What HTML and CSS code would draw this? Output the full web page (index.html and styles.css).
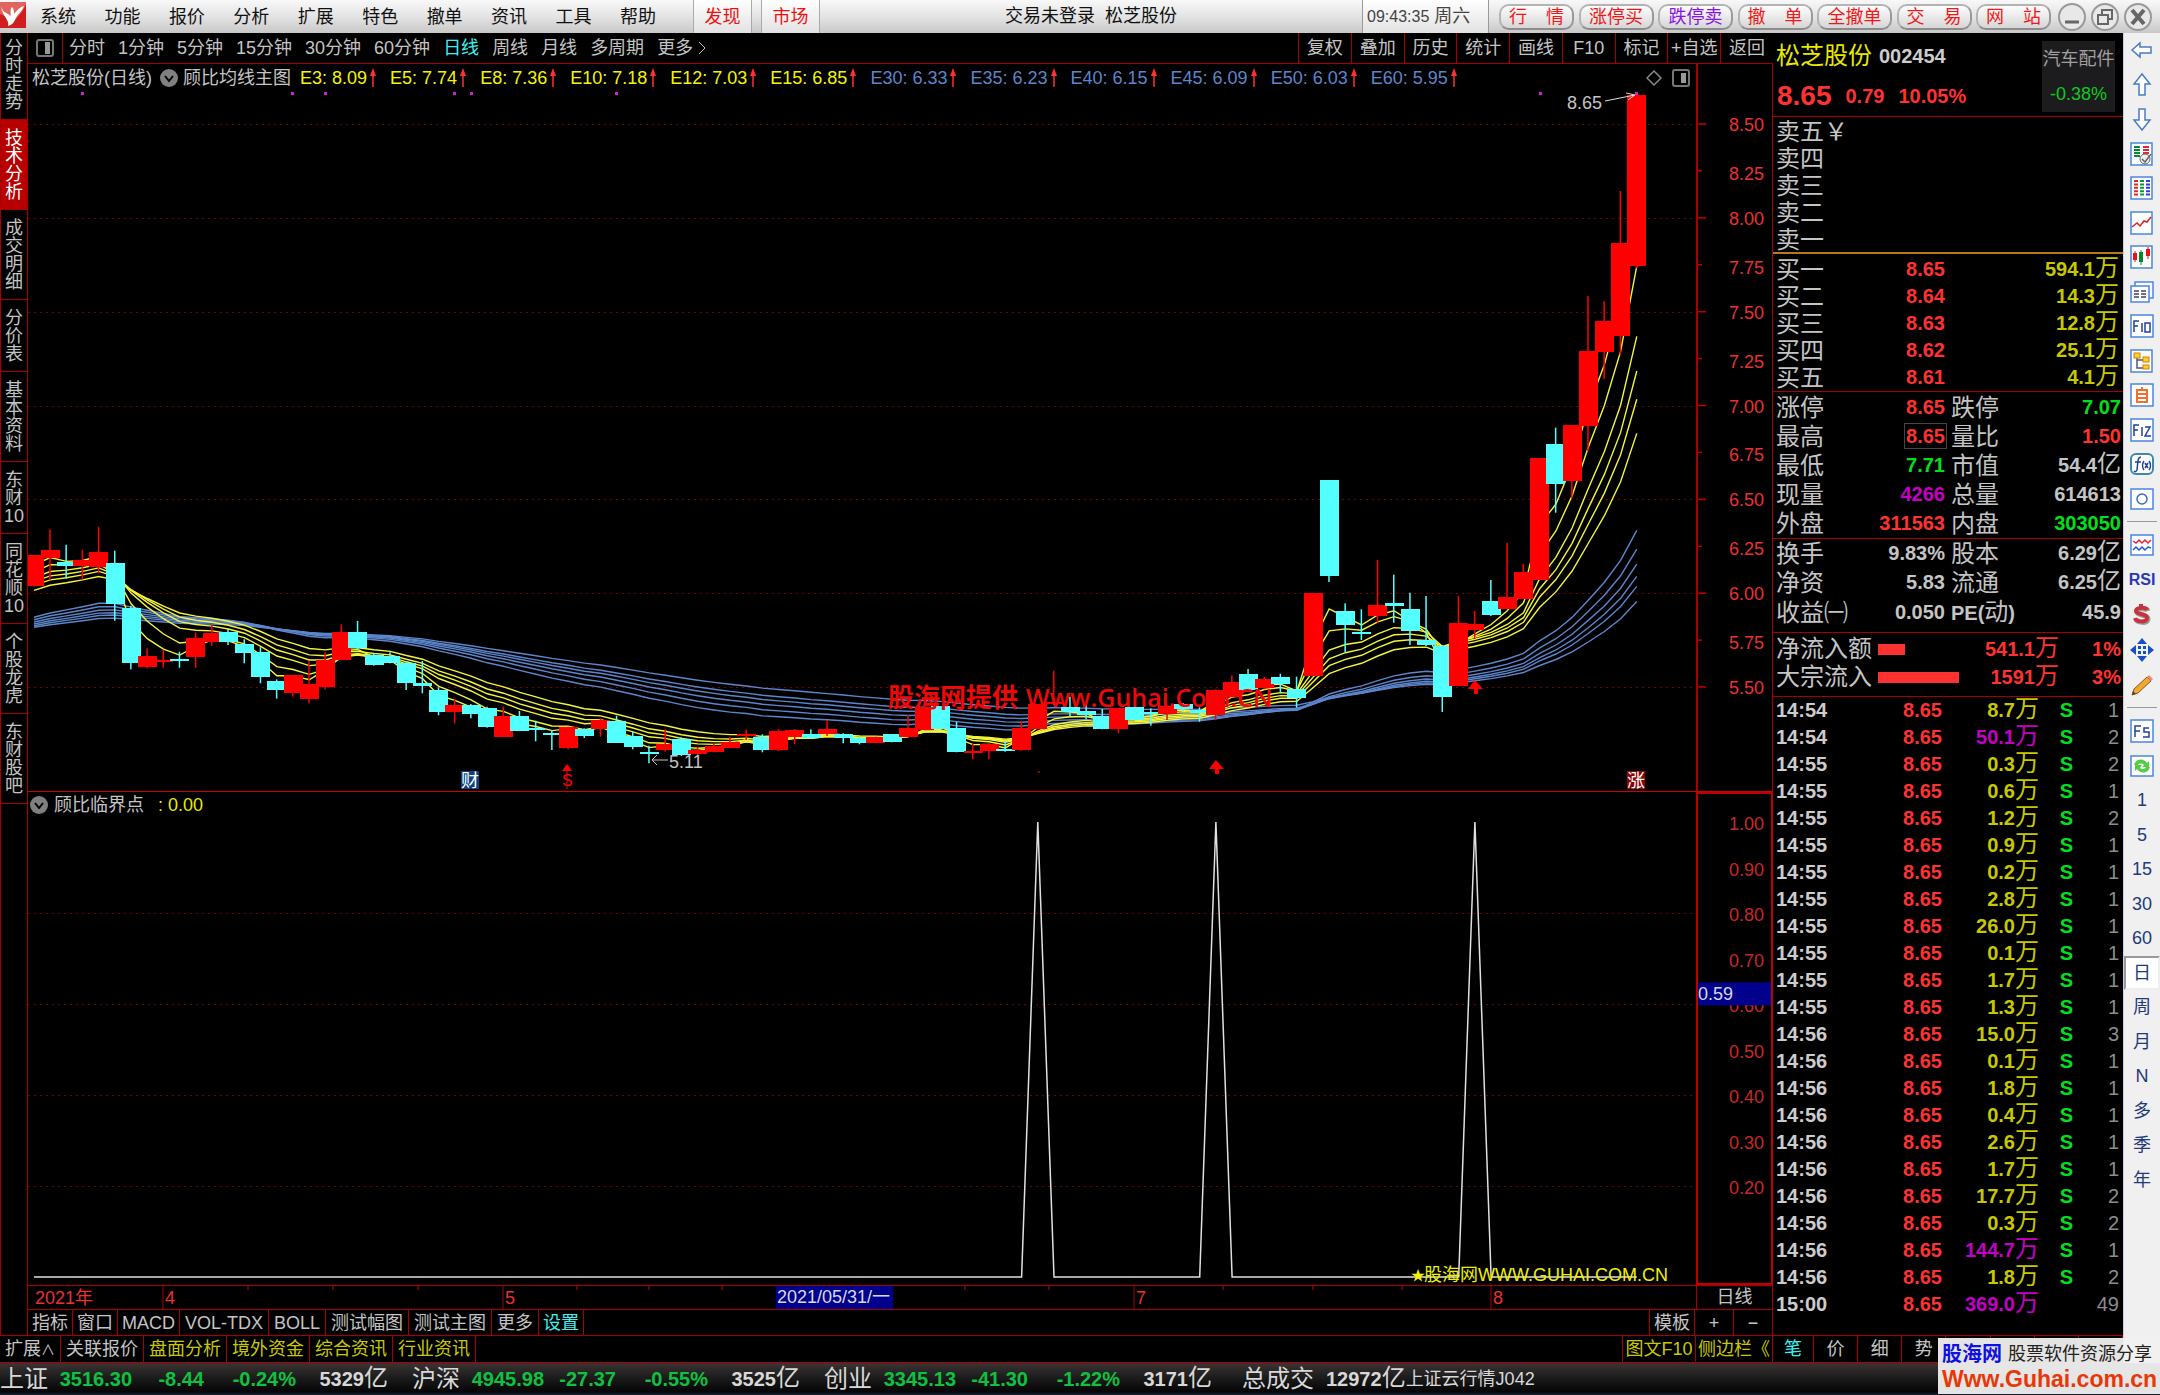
FILE: index.html
```html
<!DOCTYPE html>
<html lang="zh-CN">
<head>
<meta charset="utf-8">
<title>松芝股份 日线</title>
<link rel="stylesheet" href="styles.css">
</head>
<body>
<header class="titlebar">
  <svg class="logo" viewBox="0 0 26 26"><rect width="26" height="26" fill="#e2645e"/><path d="M0 12 0 26 26 26 26 2C22 12 16 16 12 22 10 18 6 14 0 12Z" fill="#cf1f1c"/><path d="M1 4C3 12 8 10 10 14 12 12 9 8 12 5 14 7 14 9 14 12 17 8 20 5 24 4 22 10 17 12 15 18 13 22 11 23 8 24 10 18 2 14 1 4Z" fill="#fff"/></svg>
  <nav class="menu">
    <button>系统</button><button>功能</button><button>报价</button><button>分析</button><button>扩展</button><button>特色</button><button>撤单</button><button>资讯</button><button>工具</button><button>帮助</button>
  </nav>
  <div class="hot"><button>发现</button><button>市场</button></div>
  <h1 class="caption">交易未登录&nbsp; 松芝股份</h1>
  <div class="clock"><span class="digits">09:43:35</span> 周六</div>
  <div class="trade">
    <button class="spread"><span>行</span><span>情</span></button><button>涨停买</button><button class="violet">跌停卖</button><button class="spread"><span>撤</span><span>单</span></button><button>全撤单</button><button class="spread"><span>交</span><span>易</span></button><button class="spread"><span>网</span><span>站</span></button>
  </div>
  <div class="winctl">
    <button aria-label="最小化"><svg viewBox="0 0 30 30"><circle cx="15" cy="15" r="13"/><path d="M8 20H22" stroke-width="3"/></svg></button>
    <button aria-label="还原"><svg viewBox="0 0 30 30"><circle cx="15" cy="15" r="13"/><path d="M12 12V8H22V17H19M8 13H18V22H8Z"/></svg></button>
    <button aria-label="关闭"><svg viewBox="0 0 30 30"><circle cx="15" cy="15" r="13"/><path d="M9 8 21 22M21 8 9 22" stroke-width="4"/></svg></button>
  </div>
</header>

<div class="body">
  <div class="work">
    <div class="upper">
      <nav class="rail">
        <button>分时走势</button><button class="on">技术分析</button><button>成交明细</button><button>分价表</button><button>基本资料</button><button>东财<span>10</span></button><button>同花顺<span>10</span></button><button>个股龙虎</button><button>东财股吧</button>
      </nav>
      <main class="center">
        <div class="periods">
          <button class="fold" aria-label="面板"><svg viewBox="0 0 18 18"><rect x="1" y="1" width="16" height="16" rx="2" fill="none" stroke="#777" stroke-width="2"/><rect x="9" y="3" width="5" height="12" fill="#999"/></svg></button>
          <div class="plist"><button>分时</button><button>1分钟</button><button>5分钟</button><button>15分钟</button><button>30分钟</button><button>60分钟</button><button class="on">日线</button><button>周线</button><button>月线</button><button>多周期</button><button>更多<svg class="chev" viewBox="0 0 10 18"><path d="M2 3 8 9 2 15" fill="none" stroke="#c0c0c0"/></svg></button></div>
          <div class="acts"><button>复权</button><button>叠加</button><button>历史</button><button>统计</button><button>画线</button><button>F10</button><button>标记</button><button>+自选</button><button>返回</button></div>
        </div>
        <section class="pane price">
          <div class="plotcol">
            <div class="legend">
              <span>松芝股份(日线)</span>
              <svg class="drop" viewBox="0 0 18 18"><circle cx="9" cy="9" r="9" fill="#808080"/><path d="M5 7 9 12 13 7" fill="none" stroke="#000" stroke-width="2"/></svg>
              <span class="iname">顾比均线主图</span>
              <div class="emas" id="emas"></div>
              <svg class="corner" viewBox="0 0 50 20"><path d="M8 3 15 10 8 17 1 10Z" fill="none" stroke="#888" stroke-width="1.5"/><rect x="27" y="2" width="16" height="16" rx="2" fill="none" stroke="#777" stroke-width="2"/><rect x="35" y="5" width="5" height="10" fill="#999"/></svg>
            </div>
            <div class="plot"><svg id="pricePlot"></svg></div>
          </div>
          <div class="axis"><svg id="priceAxis"></svg></div>
        </section>
        <section class="pane sub">
          <div class="plotcol">
            <div class="legend">
              <svg class="drop" viewBox="0 0 18 18"><circle cx="9" cy="9" r="9" fill="#808080"/><path d="M5 7 9 12 13 7" fill="none" stroke="#000" stroke-width="2"/></svg>
              <span class="iname">顾比临界点</span><span class="val">: 0.00</span>
            </div>
            <div class="plot"><svg id="subPlot"></svg></div>
          </div>
          <div class="axis boxed"><svg id="subAxis"></svg></div>
        </section>
        <div class="timeline"><div class="plot"><svg id="timeAxis"></svg></div><div class="tcell">日线</div></div>
        <div class="tabs itabs">
          <button>指标</button><button>窗口</button><button>MACD</button><button>VOL-TDX</button><button>BOLL</button><button>测试幅图</button><button>测试主图</button><button>更多</button><button class="cyan">设置</button>
          <span class="fill"></span>
          <button class="lead">模板</button><button class="sq">+</button><button class="sq">−</button>
        </div>
      </main>
    </div>
    <div class="tabs etabs">
      <button>扩展<span class="caret">∧</span></button><button>关联报价</button><button class="gold">盘面分析</button><button class="gold">境外资金</button><button class="gold">综合资讯</button><button class="gold">行业资讯</button>
      <span class="fill"></span>
      <button class="gold lead f10">图文F10</button><button class="gold side">侧边栏<span>《</span></button>
    </div>
  </div>

  <aside class="quote">
    <div class="qhead">
      <div class="qname"><span class="nm">松芝股份</span><b>002454</b></div>
      <div class="qprice"><b class="big">8.65</b><b>0.79</b><b>10.05%</b></div>
      <a class="sector" href="#"><span>汽车配件</span><span class="chg">-0.38%</span></a>
    </div>
    <div class="asks"><div>卖五￥</div><div>卖四</div><div>卖三</div><div>卖二</div><div>卖一</div></div>
    <table class="bids">
      <tr><th>买一</th><td class="up">8.65</td><td class="vol">594.1<i>万</i></td></tr>
      <tr><th>买二</th><td class="up">8.64</td><td class="vol">14.3<i>万</i></td></tr>
      <tr><th>买三</th><td class="up">8.63</td><td class="vol">12.8<i>万</i></td></tr>
      <tr><th>买四</th><td class="up">8.62</td><td class="vol">25.1<i>万</i></td></tr>
      <tr><th>买五</th><td class="up">8.61</td><td class="vol">4.1<i>万</i></td></tr>
    </table>
    <table class="facts">
      <tr><th>涨停</th><td class="up">8.65</td><th>跌停</th><td class="down">7.07</td></tr>
      <tr><th>最高</th><td class="up"><span class="hi">8.65</span></td><th>量比</th><td class="up">1.50</td></tr>
      <tr><th>最低</th><td class="down">7.71</td><th>市值</th><td>54.4<i>亿</i></td></tr>
      <tr><th>现量</th><td class="mag">4266</td><th>总量</th><td>614613</td></tr>
      <tr><th>外盘</th><td class="up">311563</td><th>内盘</th><td class="down">303050</td></tr>
    </table>
    <table class="facts more">
      <tr><th>换手</th><td>9.83%</td><th>股本</th><td>6.29<i>亿</i></td></tr>
      <tr><th>净资</th><td>5.83</td><th>流通</th><td>6.25<i>亿</i></td></tr>
      <tr><th>收益㈠</th><td>0.050</td><th><span class="pe">PE(</span>动<span class="pe">)</span></th><td>45.9</td></tr>
    </table>
    <div class="flows">
      <div class="flow"><span>净流入额</span><span class="track"><span class="bar" style="width:27px"></span></span><b>541.1<i>万</i></b><b>1%</b></div>
      <div class="flow"><span>大宗流入</span><span class="track"><span class="bar" style="width:81px"></span></span><b>1591<i>万</i></b><b>3%</b></div>
    </div>
    <table class="deals"><tbody id="deals"></tbody></table>
    <nav class="qtabs"><button class="on">笔</button><button>价</button><button>细</button><button>势</button><button aria-label="联动"></button><button aria-label="分值"></button><button aria-label="主力"></button><button aria-label="筹码"></button></nav>
  </aside>

  <nav class="tools">
    <div class="tgroup g14">
      <button aria-label="后退"><svg viewBox="0 0 24 24"><path class="ar" d="M2 12 10 5V9H21V15H10V19Z"/></svg></button>
      <button aria-label="上"><svg viewBox="0 0 24 24"><path class="ar" d="M12 1 20 11H15V22H9V11H4Z"/></svg></button>
      <button aria-label="下"><svg viewBox="0 0 24 24"><path class="ar" d="M12 23 20 13H15V2H9V13H4Z"/></svg></button>
      <button aria-label="报价"><svg viewBox="0 0 24 24"><rect class="fr" x="1" y="1" width="21" height="22"/><path d="M4 5H10M4 8H10M4 11H10M4 14H10" stroke="#0a8a2a" stroke-width="2"/><path d="M13 5H19M13 8H19M13 11H19" stroke="#e02a3a" stroke-width="2"/><circle cx="15" cy="17" r="5" fill="#eee" stroke="#666"/><path d="M12 17 15 20 21 12" fill="none" stroke="#666" stroke-width="1.5"/></svg></button>
      <button aria-label="列表"><svg viewBox="0 0 24 24"><rect class="fr" x="1" y="1" width="21" height="22"/><g stroke-width="4" stroke-dasharray="2 1.4"><path d="M6 4V21" stroke="#e02a2a"/><path d="M12 4V21" stroke="#0a9a2a"/><path d="M18 4V21" stroke="#2a3ae0"/></g></svg></button>
      <button aria-label="走势"><svg viewBox="0 0 24 24"><rect class="fr" x="1" y="1" width="21" height="22"/><path d="M2 16 7 12 10 15 14 10 17 11 21 6" fill="none" stroke="#d22" stroke-width="1.5"/></svg></button>
      <button aria-label="K线"><svg viewBox="0 0 24 24"><rect class="fr" x="1" y="1" width="21" height="22"/><path d="M5 6V17M18 2V14" stroke="#d11"/><path d="M11 5V20" stroke="#082"/><rect x="3" y="8" width="4" height="7" fill="#e11"/><rect x="9" y="7" width="4" height="10" fill="#083"/><rect x="16" y="4" width="4" height="7" fill="#e11"/></svg></button>
      <button aria-label="窗口"><svg viewBox="0 0 24 24"><rect class="fr" x="5" y="2" width="18" height="16"/><rect class="fr" x="1" y="6" width="18" height="16"/><path d="M4 11H9M11 11H16M4 14H9M11 14H16M4 17H9M11 17H16" stroke="#445" stroke-width="1.5"/></svg></button>
      <button aria-label="F10"><svg viewBox="0 0 24 24"><rect class="fr" x="1" y="1" width="22" height="22"/><path class="gl" d="M4 18V7H9M4 12H8M12 9V18M15 9H20V18H15Z"/></svg></button>
      <button aria-label="板块树"><svg viewBox="0 0 24 24"><rect class="fr" x="1" y="1" width="21" height="22"/><path d="M7 7V19H14M7 11H14" fill="none" stroke="#557" stroke-width="1.5"/><g fill="#fc3" stroke="#c80"><rect x="4" y="4" width="6" height="5"/><rect x="13" y="8" width="6" height="5"/><rect x="13" y="16" width="6" height="4"/></g></svg></button>
      <button aria-label="自选"><svg viewBox="0 0 24 24"><rect class="fr" x="1" y="1" width="22" height="22"/><path d="M12 4V7M7 7H17V19H7ZM7 11H17M7 15H17" fill="none" stroke="#f07030" stroke-width="2"/></svg></button>
      <button aria-label="F12"><svg viewBox="0 0 24 24"><rect class="fr" x="1" y="1" width="22" height="22"/><path class="gl" d="M4 18V7H9M4 12H8M12 9V18M15 9H20L15 18H21"/></svg></button>
      <button aria-label="公式"><svg viewBox="0 0 24 24"><rect x="1" y="2" width="22" height="20" rx="5" fill="#fff" stroke="#3a8ab0" stroke-width="2"/><path class="gl" d="M11 5C8 5 8 8 7 18 6 20 5 20 4 19M5 10H11M14 9C12 12 12 15 14 18M15 11 18 16M18 11 15 16M19 9C21 12 21 15 19 18"/></svg></button>
      <button aria-label="圆"><svg viewBox="0 0 24 24"><rect class="fr" x="1" y="2" width="22" height="20"/><circle cx="12" cy="12" r="5" fill="none" stroke="#3a6ac0" stroke-width="1.5"/></svg></button>
    </div>
    <hr>
    <div class="tgroup g5">
      <button aria-label="波浪"><svg viewBox="0 0 24 24"><rect class="fr" x="1" y="2" width="22" height="20"/><path d="M3 8 6 10 9 7 12 10 15 7 18 10 21 7" fill="none" stroke="#e23" stroke-width="1.5"/><path d="M3 17 6 14 9 17 12 14 15 17 18 14 21 15" fill="none" stroke="#25d" stroke-width="1.5"/></svg></button>
      <button class="rsi">RSI</button>
      <button aria-label="资金"><svg viewBox="0 0 24 24"><path d="M18 8C17 5 7 5 7 9 7 13 18 11 18 16 18 21 7 20 6 16" fill="none" stroke="#999" stroke-width="5"/><path d="M17 7C16 4 6 4 6 8 6 12 17 10 17 15 17 20 6 19 5 15M11 1V4" fill="none" stroke="#c8323c" stroke-width="4"/></svg></button>
      <button aria-label="移动"><svg viewBox="0 0 24 24"><path d="M12 0 17 6H7ZM12 24 17 18H7ZM0 12 6 7V17ZM24 12 18 7V17ZM8 8H11V11H8ZM13 8H16V11H13ZM8 13H11V16H8ZM13 13H16V16H13Z" fill="#1450c8"/></svg></button>
      <button aria-label="画笔"><svg viewBox="0 0 24 24"><path d="M2 22 4 16 17 4 21 8 8 20Z" fill="#f0a830" stroke="#8a5a20"/><path d="M17 4 19 2 23 6 21 8Z" fill="#e88"/><path d="M2 22 3 18 6 21Z" fill="#543"/></svg></button>
    </div>
    <hr>
    <div class="tgroup g14">
      <button aria-label="F5"><svg viewBox="0 0 24 24"><rect class="fr" x="1" y="1" width="22" height="22"/><path class="gl" d="M5 18V7H11M5 12H10M19 9H14V13H19V18H13"/></svg></button>
      <button aria-label="刷新"><svg viewBox="0 0 24 24"><rect class="fr" x="1" y="2" width="22" height="20"/><path d="M4 11C6 4 14 4 17 9L19 7V13H12L14 11C12 9 9 9 8 11ZM20 13C18 20 10 20 7 15L5 17V11H12L10 14C12 16 15 15 16 13Z" fill="#5c4"/></svg></button>
      <button>1</button><button>5</button><button>15</button><button>30</button><button>60</button><button class="on">日</button><button>周</button><button>月</button><button>N</button><button>多</button><button>季</button><button>年</button>
    </div>
  </nav>
</div>

<footer class="status">
  <div class="idx"><span class="k">上证</span><b class="g">3516.30</b><b class="g">-8.44</b><b class="g">-0.24%</b><b>5329<i>亿</i></b></div>
  <div class="idx"><span class="k">沪深</span><b class="g">4945.98</b><b class="g">-27.37</b><b class="g">-0.55%</b><b>3525<i>亿</i></b></div>
  <div class="idx"><span class="k">创业</span><b class="g">3345.13</b><b class="g">-41.30</b><b class="g">-1.22%</b><b>3171<i>亿</i></b></div>
  <div class="total"><span class="k">总成交</span><b>12972<i>亿</i></b><span class="src">上证云行情J042</span></div>
</footer>
<div class="badge"><div class="bline"><b>股海网</b><span>股票软件资源分享</span></div><a href="#">Www.Guhai.com.cn</a></div>
<script src="chart.js"></script>
</body>
</html>
```
FILE: styles.css
```css
*{box-sizing:border-box}
html,body{height:100%;margin:0}
body{
  --line:#a80000;
  --txt:#c4c4c4;
  display:flex;flex-direction:column;
  min-height:900px;background:#000;color:var(--txt);
  font:18px/24px "Liberation Sans","Noto Sans CJK SC",sans-serif;
  overflow:hidden;
}
button{margin:0;padding:0;border:0;background:none;color:inherit;font:inherit;white-space:nowrap}
a{text-decoration:none;color:inherit}
i{font-style:normal;font-weight:400;font-size:24px}
svg{display:block}

/* title bar */
.titlebar{flex:none;height:33px;display:flex;align-items:stretch;color:#111;background:linear-gradient(#f8f8f8,#e4e4e4 50%,#c8c8c8)}
.logo{width:26px;height:26px;margin-top:2px}
.menu{width:616px;margin-left:14px;display:flex;justify-content:space-between}
.hot{display:flex;gap:9px;margin-left:37px}
.hot button{width:59px;color:#f01010;background:linear-gradient(#fff,#e2e2e2);border-left:1px solid #aaa;border-right:1px solid #aaa}
.caption{flex:1;margin:0;font-size:18px;font-weight:400;line-height:33px;text-align:center}
.clock{width:127px;padding-left:4px;line-height:33px;color:#444;background:linear-gradient(#fff,#e2e2e2);border-left:1px solid #999;border-right:1px solid #999}
.digits{font-size:16px}
.trade{width:552px;margin-left:10px;display:flex;justify-content:space-between;align-items:center}
.trade button{width:75px;height:26px;line-height:22px;color:#f01818;border:2px solid #b4b4b4;border-bottom-color:#8c8c8c;border-right-color:#999;border-radius:10px;background:linear-gradient(#fdfdfd,#d6d6d6)}
.trade .spread{display:flex;justify-content:space-between;padding:0 8px}
.trade .violet{color:#8a14e6}
.winctl{display:flex;align-items:center;gap:3px;margin:0 7px 0 6px}
.winctl svg{width:30px;height:30px;fill:none;stroke:#666;stroke-width:2}
.winctl circle{fill:#e8e8e8;stroke:#999}

/* main frame */
.body{flex:1;min-height:0;display:flex}
.work{flex:1;min-width:0;display:flex;flex-direction:column}
.upper{flex:1;min-height:0;display:flex}
.rail{width:28px;display:flex;flex-direction:column;border:1px solid var(--line);border-top:0}
.rail button{padding:9px 3px 8px;width:26px;font-size:18px;line-height:18px;white-space:normal;word-break:break-all;border-bottom:1px solid var(--line)}
.rail button:first-child{padding-top:6px}
.rail .on{background:#b80000;color:#fff}
.rail span{display:block;white-space:nowrap}
.center{flex:1;min-width:0;display:flex;flex-direction:column}

.periods{flex:none;height:31px;display:flex;align-items:center;border-bottom:1px solid var(--line)}
.fold{height:30px;width:35px;padding-left:8px;border-right:1px solid var(--line)}
.fold svg{width:18px;height:18px}
.plist{flex:1;display:flex;gap:13px;padding-left:6px}
.plist button{display:flex;align-items:center}
.plist .on{color:#3ff0f0}
.chev{width:10px;height:18px;margin-left:4px}
.acts{width:475px;height:30px;display:grid;grid-template-columns:repeat(9,1fr)}
.acts button{border-left:1px solid var(--line)}

.pane{display:flex;min-height:0}
.price{flex:727 1 0}
.sub{flex:493 1 0;border-top:1px solid #d00000}
.plotcol{flex:1;min-width:0;display:flex;flex-direction:column}
.legend{flex:none;height:28px;display:flex;align-items:center;padding-left:4px}
.sub .legend{height:24px;padding:2px 0 0 2px}
.drop{width:18px;height:18px;margin:0 5px 0 8px}
.sub .drop{margin:0 6px 0 0}
.emas{flex:1;display:flex;gap:13px;padding-left:9px;color:#f4f400}
.emas span{display:flex;align-items:center}
.emas .slow{color:#5c86cc}
.emas svg{width:10px;height:20px}
.corner{width:50px;height:20px}
.val{margin-left:14px;color:#e8e800}
.plot{flex:1;min-height:0;min-width:0;overflow:hidden}
.plot svg,.axis svg{width:100%;height:100%}
.axis{flex:none;width:77px;overflow:hidden;border-left:2px solid var(--line);border-right:1px solid var(--line)}
.boxed{border:2px solid #c00000}
.timeline{flex:none;height:25px;display:flex;border-top:1px solid var(--line);border-bottom:1px solid var(--line)}
.tcell{width:77px;text-align:center;line-height:23px;border-left:1px solid var(--line);border-right:1px solid var(--line)}

.tabs{flex:none;height:26px;display:flex;border-bottom:1px solid var(--line)}
.tabs button{padding:0 5px;line-height:26px;border-right:1px solid var(--line)}
.itabs button{padding:0 4px}
.itabs button:nth-child(n+4):nth-child(-n+8){padding:0 5px}
.tabs .fill{flex:1}
.tabs .lead{border-left:1px solid var(--line)}
.tabs .sq{width:39px}
.etabs{height:27px}
.caret{font-size:14px}
.etabs .f10{width:74px;padding:0 1px}
.etabs .side{width:77px;padding:0 2px;overflow:hidden;display:flex;align-items:center}
.cyan{color:#3ff0f0}
.gold{color:#c8c800}

/* quote panel */
.quote{flex:none;width:350px;display:flex;flex-direction:column;font-size:20px}
.quote b,.quote td{font-weight:700}
.qhead{height:84px;display:grid;grid-template:46px 33px / 1fr 73px;padding-right:8px;border-bottom:1px solid var(--line)}
.qname{display:flex;align-items:center;gap:7px;padding-left:3px;font-size:24px;color:#e8e800}
.qname b{font-size:20px;color:#ccc}
.qprice{display:flex;align-items:center;gap:14px;padding-left:4px;color:#ff3232}
.qprice .big{font-size:28px}
.sector{grid-area:1/2/3/3;margin:8px 0 0;background:#1c1c1e;font-size:18px;display:flex;flex-direction:column;justify-content:space-around;align-items:center;color:#a0a0a0;white-space:nowrap}
.sector .chg{color:#10c820}
.asks{height:137px;padding:1px 3px 0;font-size:24px;line-height:27px;border-bottom:2px solid #b87820}
table{border-collapse:collapse;table-layout:fixed;width:100%}
th{font-weight:400;font-size:24px;text-align:left;white-space:nowrap}
td{text-align:right;white-space:nowrap}
th,td{padding:0;line-height:27px;height:27px}
i{line-height:20px}
.bids{border-bottom:1px solid var(--line);border-collapse:separate;border-spacing:0;padding:2px 4px 0 3px}
.bids th{width:80px}
.bids td.up{width:89px}
.up{color:#ff3232}
.down{color:#00e01c}
.mag{color:#c400c4}
.vol{color:#c8c800}
.facts{border-collapse:separate;border-spacing:0;padding:1px 2px 0 3px;border-bottom:1px solid var(--line)}
.facts th,.facts td{height:29px;line-height:29px}
.facts th{width:76px}
.facts td:nth-child(2){width:93px}
.facts th:nth-child(3){padding-left:6px}
.facts.more{padding:0 2px 4px 3px}
.hi{outline:1px solid #444;outline-offset:1px}
.pe{font-size:20px;font-weight:700}
.flows{height:64px;padding:2px 2px 0 3px;border-bottom:1px solid var(--line)}
.flow{height:28px;display:grid;grid-template-columns:102px 82px 1fr 62px;align-items:center;color:#ff3232;text-align:right}
.flow>span:first-child{font-size:24px;color:var(--txt);text-align:left}
.bar{display:block;height:11px;background:#ff3232}
.deals{margin-left:3px;width:343px}
.deals td:first-child{width:76px;text-align:left;color:#ccc}
.deals td:nth-child(2){width:90px}
.deals td:nth-child(3){width:97px}
.deals td:nth-child(4){width:34px;color:#00e01c}
.deals td:nth-child(5){font-weight:400;color:#8c8c8c}
.qtabs{margin-top:auto;height:28px;display:grid;grid-template-columns:41px repeat(7,1fr);border-top:1px solid var(--line);border-bottom:1px solid var(--line);font-size:18px}
.qtabs button{border-right:1px solid var(--line)}
.qtabs .on{color:#3ff0f0}

/* tool strip */
.tools{flex:none;width:37px;background:#f0f0f0;color:#223a7a;border-left:1px solid #c8d0e0}
.tgroup{display:grid;grid-auto-rows:1fr}
.g14{height:483px}
.g5{height:174px}
.tgroup button{display:flex;align-items:center;justify-content:center}
.tgroup svg{width:24px;height:24px;overflow:visible}
.tgroup .on{background:#fff;border:2px solid #999;border-right-color:#eee;border-bottom-color:#eee}
.tools hr{margin:5px 3px 6px;border:0;border-top:1px solid #999}
.rsi{font-size:16px;font-weight:700;color:#2838b8}
.ar{fill:#fff;stroke:#4a7ac8;stroke-width:1.5}
.fr{fill:#fff;stroke:#4a86e0;stroke-width:1.5}
.gl{fill:none;stroke:#24409a;stroke-width:1.5}

/* index strip */
.status{flex:none;height:32px;display:flex;white-space:nowrap;font-size:20px;line-height:32px;color:#d8d8d8;background:linear-gradient(#3c3434,#1c1c1c 45%,#050505 90%,#1a2430)}
.idx{display:grid;grid-template-columns:54px 78px 72px 92px 92px;width:412px;text-align:right}
.k{font-size:24px;text-align:left}
.g{color:#10c040}
.total{display:flex}
.total .k{margin:0 12px 0 6px}
.src{font-size:18px}

.badge{position:absolute;right:0;bottom:1px;width:222px;height:56px;padding:3px 4px;background:rgba(240,240,240,.95)}
.bline{display:flex;align-items:center;gap:6px;line-height:26px}
.bline b{font-size:20px;color:#1010e0}
.bline span{font-size:18px;color:#222;white-space:nowrap}
.badge a{display:block;font-size:23px;line-height:24px;font-weight:700;color:#e83808}
```
FILE: chart.js
```js
// Candles: [dir, body top, body bottom, wick top, wick bottom], in thirds of a plot row, down from the 7.03 level.
const K = [
[1,466,558,466,560],[1,450,473,388,540],[0,485,496,434,536],[1,479,496,450,538],[1,457,502,380,520],
[0,488,612,452,662],[0,623,788,617,808],[1,768,802,745,805],[1,779,783,750,803],[0,776,783,755,803],
[1,713,770,697,803],[1,700,726,676,737],[0,695,726,686,735],[0,731,757,718,790],[0,755,830,742,850],
[0,843,870,838,896],[1,826,880,826,890],[1,852,897,783,910],[1,780,860,757,868],[1,696,780,673,780],
[0,696,744,663,750],[0,765,794,760,797],[0,768,788,757,790],[0,790,851,783,870],[0,849,857,783,880],
[0,870,937,862,946],[1,916,937,898,970],[0,916,942,912,955],[0,925,983,920,983],[1,948,1010,920,1010],
[0,947,992,933,992],[0,983,988,962,1024],[0,1000,1004,990,1050],[1,980,1042,980,1048],[0,988,1010,985,1014],
[1,961,987,955,1010],[0,962,1028,947,1028],[0,1007,1041,995,1048],[0,1056,1063,1037,1090],[1,1032,1050,988,1055],
[0,1017,1065,1012,1068],[1,1051,1063,1040,1065],[1,1038,1055,1030,1057],[1,1025,1042,1010,1045],[1,1003,1009,988,1020],
[0,1010,1050,1003,1057],[1,993,1050,988,1053],[1,990,1010,987,1033],[0,1003,1014,988,1017],[1,988,1004,960,1008],
[0,1003,1014,1000,1030],[0,1013,1028,1010,1033],[1,1010,1028,1010,1028],[0,1002,1027,1002,1027],[1,984,1010,945,1012],
[1,920,990,915,990],[0,918,988,918,988],[0,984,1055,965,1057],[1,1053,1059,1030,1078],[1,1033,1054,1030,1078],
[0,1047,1054,1025,1055],[1,984,1050,965,1052],[1,912,988,912,988],[1,905,911,812,915],[0,922,938,890,948],
[0,933,945,915,957],[0,948,988,927,988],[1,925,988,925,1000],[0,920,960,920,960],[0,937,942,925,977],
[1,917,942,915,960],[0,913,928,910,935],[0,930,940,922,965],[1,870,945,868,960],[1,845,890,826,892],
[0,822,870,807,872],[1,837,865,830,868],[0,830,851,821,880],[0,867,893,830,923],[1,578,828,578,828],
[0,240,528,240,546],[0,632,675,610,756],[0,695,699,628,720],[1,615,648,480,668],[0,610,619,524,668],
[0,628,693,578,735],[0,719,735,588,738],[0,738,891,735,936],[1,668,858,588,858],[1,672,689,633,717],
[0,604,645,540,648],[1,591,627,429,627],[1,515,596,492,596],[1,174,540,174,540],[0,132,252,83,338],
[1,75,243,75,294],[1,-147,78,-312,153],[1,-236,-144,-296,-63],[1,-470,-192,-627,-135],[1,-915,-403,-915,-395]];

// Averages: [period, last value, starting level]
const EMA = [[3,'8.09',495],[5,'7.74',516],[8,'7.36',533],[10,'7.18',545],[12,'7.03',556],[15,'6.85',571],
[30,'6.33',652],[35,'6.23',659],[40,'6.15',666],[45,'6.09',672],[50,'6.03',677],[60,'5.95',682]];

const SIGNALS = [62, 73, 89];

const DEALS = [['14:54','8.7',1],['14:54','50.1',2],['14:55','0.3',2],['14:55','0.6',1],['14:55','1.2',2],['14:55','0.9',1],
['14:55','0.2',1],['14:55','2.8',1],['14:55','26.0',1],['14:55','0.1',1],['14:55','1.7',1],['14:55','1.3',1],['14:56','15.0',3],
['14:56','0.1',1],['14:56','1.8',1],['14:56','0.4',1],['14:56','2.6',1],['14:56','1.7',1],['14:56','17.7',2],['14:56','0.3',2],
['14:56','144.7',1],['14:56','1.8',2],['15:00','369.0',49]];

document.getElementById('emas').innerHTML = EMA.map(([n, v]) =>
  `<span class="${n >= 30 ? 'slow' : ''}">E${n}: ${v}<svg viewBox="0 0 10 20"><path d="M6 5V19" stroke="#ff3232" stroke-width="1.5"/><path d="M6 0 9 8H3Z" fill="#ff3232"/></svg></span>`).join('');

document.getElementById('deals').innerHTML = DEALS.map(([t, v, n]) =>
  `<tr><td>${t}</td><td class="up">8.65</td><td class="${parseFloat(v) >= 50 ? 'mag' : 'vol'}">${v}<i>万</i></td><td>${t === '15:00' ? '' : 'S'}</td><td>${n}</td></tr>`).join('');

// Returns scale helpers for an svg that was laid out on a w × h grid.
function surface(id, w, h) {
  const el = document.getElementById(id), r = el.getBoundingClientRect();
  return { el, W: r.width, H: r.height, x: v => +(v * r.width / w).toFixed(1), y: v => +(v * r.height / h).toFixed(1) };
}
const line = (x1, y1, x2, y2, c, extra = '') => `<path d="M${x1} ${y1}L${x2} ${y2}" stroke="${c}" fill="none" ${extra}/>`;
const text = (x, y, s, c, extra = '') => `<text x="${x}" y="${y}" fill="${c}" ${extra}>${s}</text>`;
const barX = i => 6 + i * 16.19;
const DOTS = 'stroke-dasharray="2 4" shape-rendering="crispEdges"';

function drawPrice() {
  const s = surface('pricePlot', 1668, 699), lv = u => s.y(308 + u / 3);
  let o = '';
  for (let p = 8.5; p > 5.4; p -= 0.5) { const y = Math.round(s.y(32 + (8.5 - p) * 187.67)); o += line(0, y + .5, s.W, y + .5, '#7a0000', DOTS); }
  const series = EMA.map(([n, , seed]) => {
    let v = seed, d = '';
    K.forEach((k, i) => { const c = k[0] ? k[1] : k[2]; if (i) v += (c - v) * 2 / (n + 1); d += (i ? 'L' : 'M') + s.x(barX(i)) + ' ' + lv(v); });
    return `<path d="${d}" fill="none" stroke="${n >= 30 ? '#5c86cc' : '#f4f43c'}" stroke-width="1.4"/>`;
  });
  o += series.reverse().join('');
  const bw = s.x(19);
  K.forEach((k, i) => {
    const x = s.x(barX(i)), c = k[0] ? '#ff0000' : '#54ffff';
    o += `<rect x="${x - 1}" y="${lv(k[3])}" width="1.5" height="${lv(k[4]) - lv(k[3])}" fill="${c}"/>`;
    o += `<rect x="${Math.round(x - bw / 2)}" y="${Math.round(lv(k[1]))}" width="${bw}" height="${Math.max(2, Math.round(lv(k[2]) - lv(k[1])))}" fill="${c}"/>`;
  });
  [54, 264, 297, 426, 443, 588, 1512, 1608].forEach(x => { o += `<rect x="${s.x(x) - 1}" y="0" width="3" height="3" fill="#d020d0"/>`; });
  // high and low call-outs
  o += text(s.x(1539), s.y(11) + 6, '8.65', '#c4c4c4') + line(s.x(1577), s.y(9), s.x(1607), s.y(3), '#ddd') + line(s.x(1598), s.y(1), s.x(1607), s.y(3), '#ddd') + line(s.x(1600), s.y(8), s.x(1607), s.y(3), '#ddd');
  o += text(s.x(641), s.y(670) + 6, '5.11', '#c4c4c4') + `<path d="M${s.x(640)} ${s.y(668)}h-16l5 -5m-5 5l5 5" stroke="#c4c4c4" fill="none"/>`;
  // event marks
  const bx = s.x(433), by = s.y(679), zx = s.x(1599);
  o += `<rect x="${bx}" y="${by}" width="18" height="18" fill="#0c4080"/>` + text(bx, by + 16, '财', '#fff');
  o += `<rect x="${zx}" y="${by}" width="18" height="18" fill="#900000"/>` + text(zx, by + 16, '涨', '#fff');
  o += text(s.x(534), by + 15, 'S', '#ff0000', 'font-size="16"') + `<path d="M${s.x(539)} ${by - 7}l5 7h-10Z" fill="#f00"/><path d="M${s.x(539)} ${by}v18" stroke="#f00"/>`;
  const arrow = (x, y) => `<path d="M${x} ${y - 7}l8 9h-5v5h-4v-5h-6Z" fill="#ff0000"/>`;
  o += arrow(s.x(barX(73)), s.y(675)) + arrow(s.x(barX(89)), s.y(595));
  o += `<rect x="${s.x(barX(62))}" y="${s.y(679)}" width="2" height="2" fill="#900"/>`;
  o += text(s.x(860), s.y(606) + 9, '股海网提供', '#f00808', 'font-size="26" font-weight="700"');
  o += text(s.x(998), s.y(606) + 9, 'Www.Guhai.Com.CN', '#f00808', 'font-size="25" font-family="Open Sans" font-weight="600"');
  s.el.innerHTML = o;

  const a = surface('priceAxis', 74, 727);
  o = '';
  for (let i = 0; i < 13; i++) {
    const y = a.y(60 + i * 46.92);
    o += line(0, y, i % 2 ? 4 : 8, y, '#c00000', 'stroke-width="1.5"') + text(a.x(66), y + (i % 2 ? 9 : 7), (8.5 - i * .25).toFixed(2), '#e83232', 'text-anchor="end"');
  }
  a.el.innerHTML = o;
}

function drawSub() {
  const s = surface('subPlot', 1668, 468), v = n => s.y(460 - n * 454);
  let o = '';
  [.8, .6, .4, .2].forEach(n => { const y = Math.round(v(n)); o += line(0, y + .5, s.W, y + .5, '#7a0000', DOTS); });
  const d = K.map((_, i) => (i ? 'L' : 'M') + s.x(barX(i)) + ' ' + v(SIGNALS.includes(i) ? 1 : 0)).join('');
  o += `<path d="${d}" fill="none" stroke="#e0e0e0" stroke-width="1.5"/>`;
  o += text(s.x(1383), s.y(457) + 6, '★', '#f0f000', 'font-size="14"') + text(s.x(1396), s.y(457) + 7, '股海网WWW.GUHAI.COM.CN', '#f0f000');
  s.el.innerHTML = o;

  const a = surface('subAxis', 73, 488);
  o = '';
  for (let i = 10; i > 1; i--) o += text(a.x(66), a.y(483 - i * 45.4) + 7, (i / 10).toFixed(2), '#c82828', 'text-anchor="end"');
  o += `<rect x="0" y="${a.y(188)}" width="${a.W}" height="23" fill="#00008c"/>` + text(0, a.y(188) + 18, '0.59', '#d8d8e8');
  a.el.innerHTML = o;
}

function drawTime() {
  const s = surface('timeAxis', 1668, 23);
  let o = text(s.x(7), 18, '2021年', '#e83232');
  [[135, '4'], [475, '5'], [1106, '7'], [1463, '8']].forEach(([x, t]) => { o += line(s.x(x), 0, s.x(x), 23, '#a80000') + text(s.x(x) + 2, 18, t, '#e83232'); });
  [220, 305, 390, 549, 621, 694, 937, 1021, 1195, 1285, 1374].forEach(x => { o += line(s.x(x), 0, s.x(x), 4, '#c00000'); });
  o += `<rect x="${s.x(748)}" y="0" width="117" height="23" fill="#00008c"/>` + text(s.x(748) + 1, 17, '2021/05/31/一', '#d8d8e8');
  s.el.innerHTML = o;
}

function draw() { drawPrice(); drawSub(); drawTime(); }
draw();
addEventListener('resize', draw);
```
